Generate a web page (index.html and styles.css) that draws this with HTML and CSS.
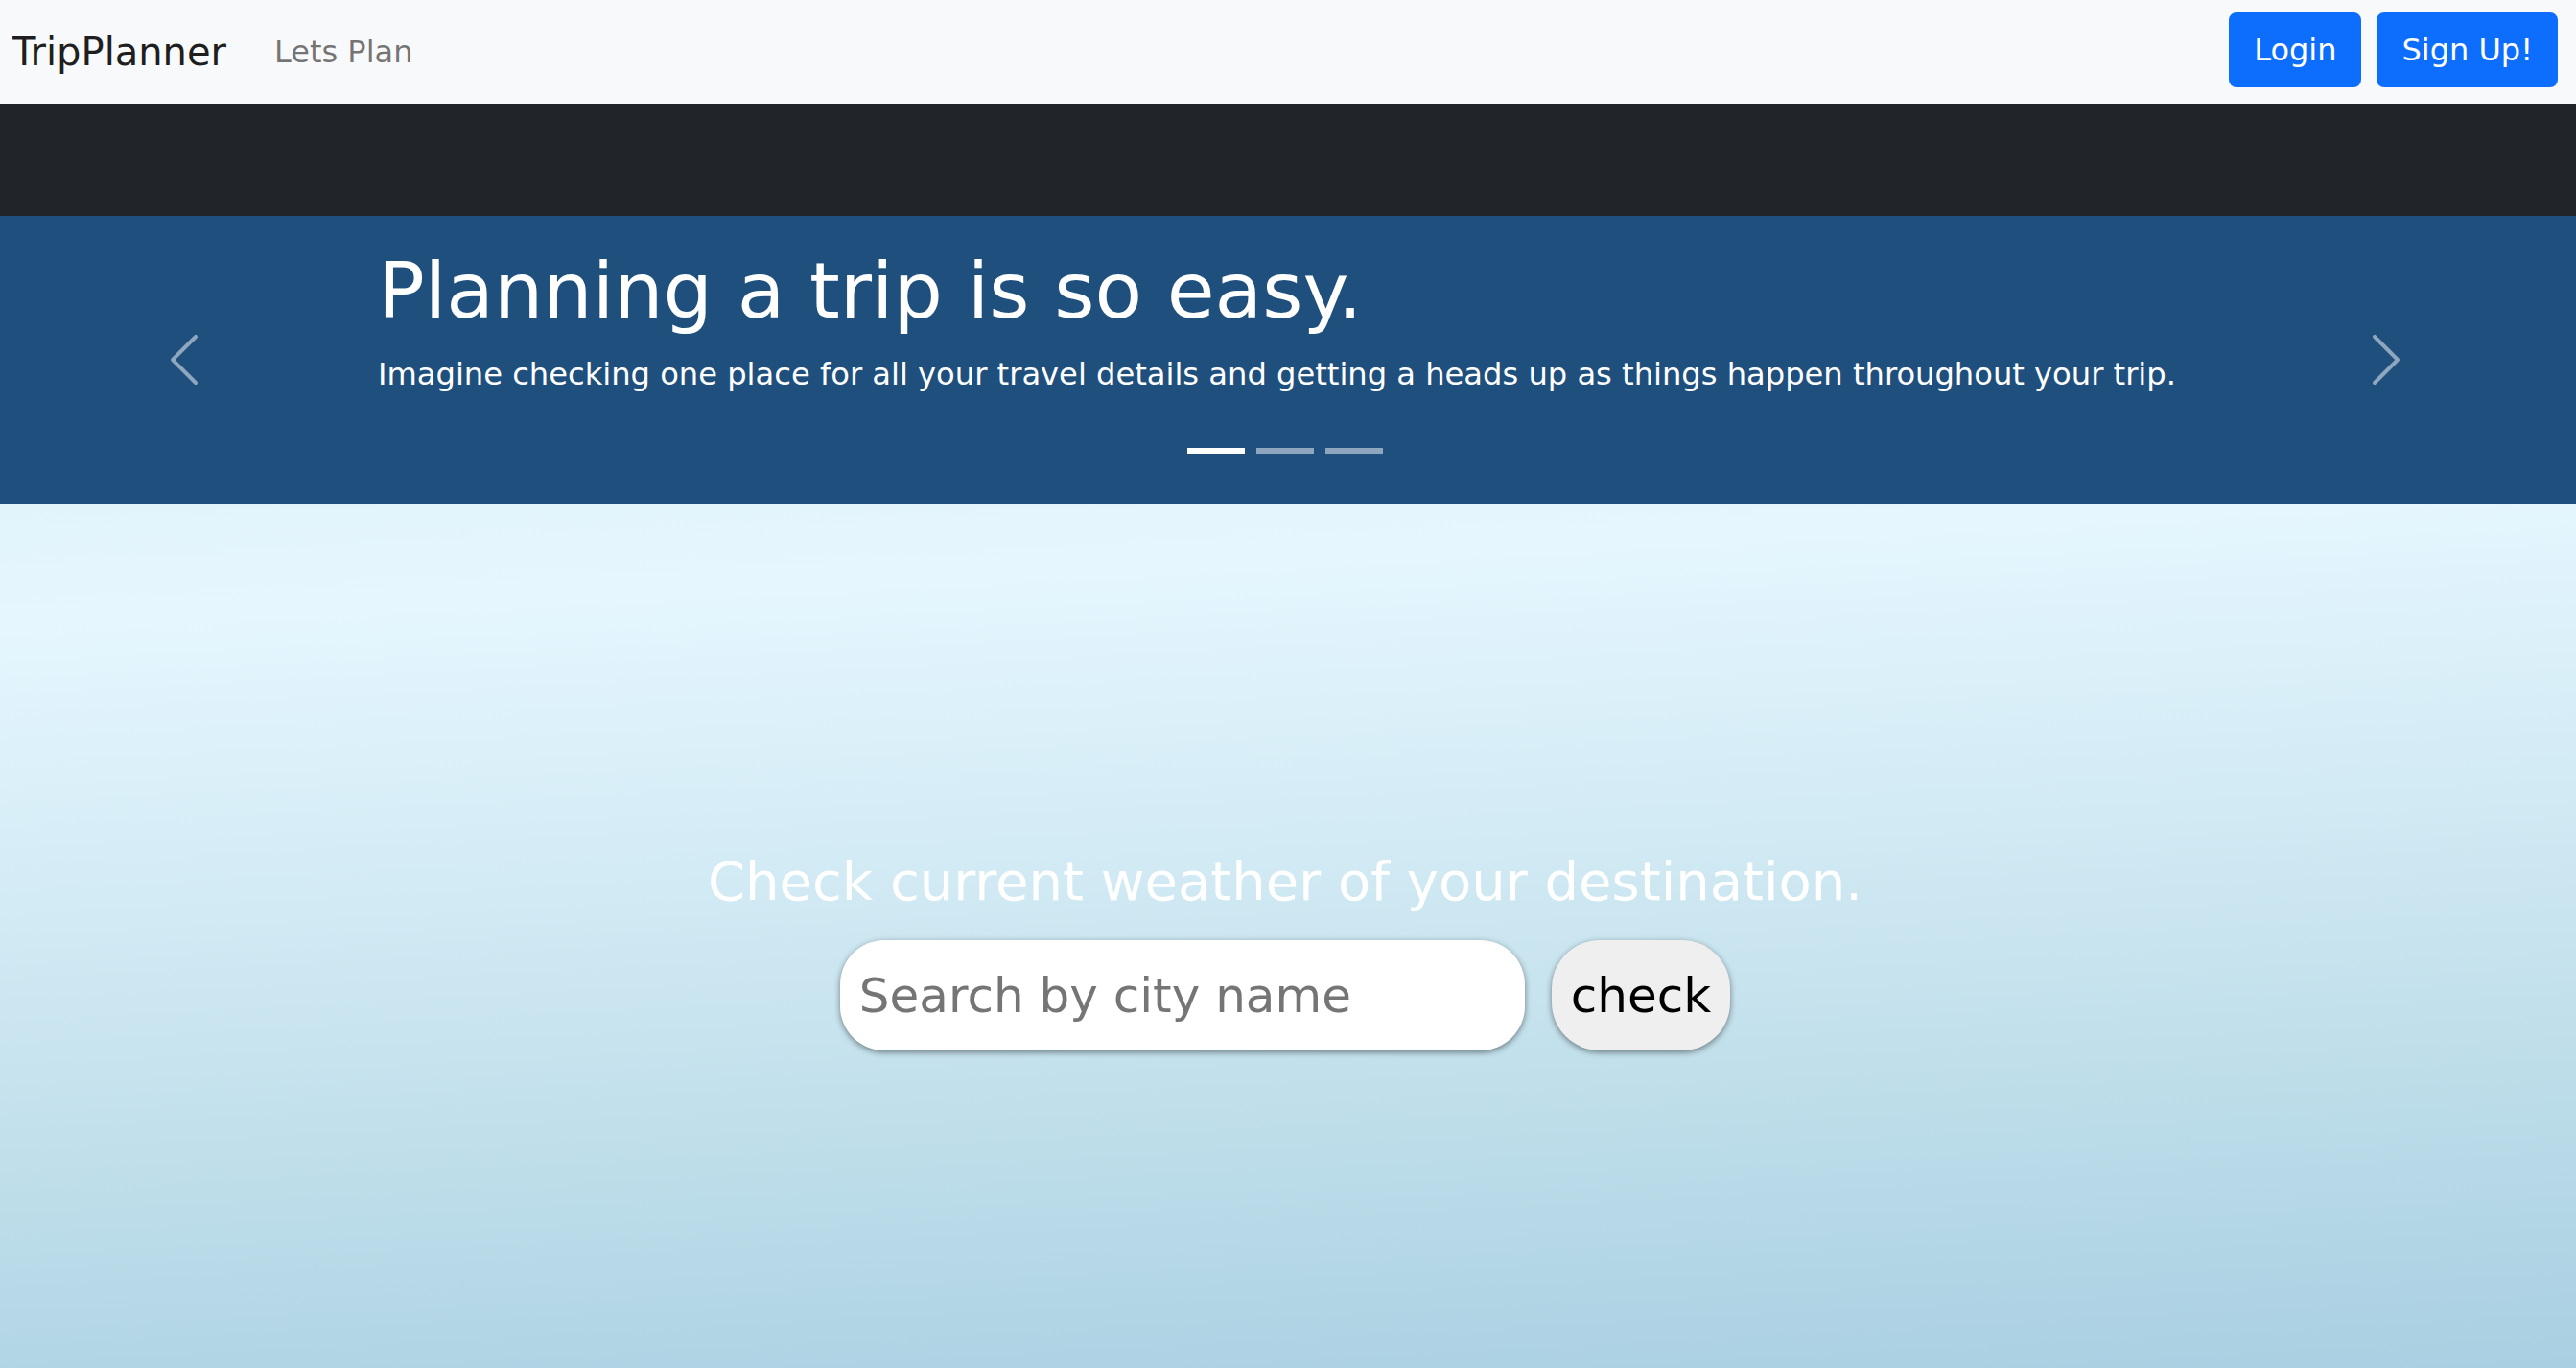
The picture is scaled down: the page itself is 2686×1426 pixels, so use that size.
FILE: index.html
```html
<!DOCTYPE html>
<html lang="en">
<head>
<meta charset="utf-8">
<title>TripPlanner</title>
<link rel="stylesheet" href="styles.css">
</head>
<body>
<nav class="navbar">
  <div class="nav-left">
    <a class="brand" href="#">TripPlanner</a>
    <a class="nav-link" href="#">Lets Plan</a>
  </div>
  <div class="nav-right">
    <button class="btn" type="button">Login</button>
    <button class="btn" type="button">Sign Up!</button>
  </div>
</nav>

<div class="dark-band"></div>

<section class="carousel">
  <button class="control control-prev" type="button" aria-label="Previous">
    <svg viewBox="0 0 16 16" width="64" height="64"><path d="M11.354 1.646a.5.5 0 0 1 0 .708L5.707 8l5.647 5.646a.5.5 0 0 1-.708.708l-6-6a.5.5 0 0 1 0-.708l6-6a.5.5 0 0 1 .708 0z"/></svg>
  </button>
  <div class="caption">
    <h1>Planning a trip is so easy.</h1>
    <p>Imagine checking one place for all your travel details and getting a heads up as things happen throughout your trip.</p>
  </div>
  <button class="control control-next" type="button" aria-label="Next">
    <svg viewBox="0 0 16 16" width="64" height="64"><path d="M4.646 1.646a.5.5 0 0 1 .708 0l6 6a.5.5 0 0 1 0 .708l-6 6a.5.5 0 0 1-.708-.708L10.293 8 4.646 2.354a.5.5 0 0 1 0-.708z"/></svg>
  </button>
  <div class="indicators">
    <span class="indicator active"></span>
    <span class="indicator"></span>
    <span class="indicator"></span>
  </div>
</section>

<main class="weather">
  <h3>Check current weather of your destination.</h3>
  <form class="search" onsubmit="return false;">
    <input class="search-input" type="text" placeholder="Search by city name">
    <button class="search-btn" type="submit">check</button>
  </form>
</main>
</body>
</html>
```
FILE: styles.css
```css
* {
  box-sizing: border-box;
}

html, body {
  margin: 0;
  padding: 0;
}

body {
  font-family: "DejaVu Sans", "Verdana", sans-serif;
  color: #212529;
  background: #a9cfe2;
}

.navbar {
  display: flex;
  align-items: center;
  justify-content: space-between;
  height: 108px;
  padding: 0 19px 0 13px;
  background: #f8f9fa;
}

.nav-left {
  display: flex;
  align-items: center;
}

.brand {
  font-size: 40px;
  line-height: 60px;
  padding-top: 0;
  color: rgba(0, 0, 0, 0.9);
  text-decoration: none;
  margin-right: 50px;
}

.nav-link {
  font-size: 32px;
  line-height: 48px;
  color: rgba(0, 0, 0, 0.55);
  text-decoration: none;
}

.nav-right {
  display: flex;
  gap: 16px;
  margin-bottom: 4px;
}

.btn {
  font-family: inherit;
  font-size: 32px;
  line-height: 48px;
  padding: 13px 24px;
  color: #fff;
  background: #0d6efd;
  border: 2px solid #0d6efd;
  border-radius: 8px;
  cursor: pointer;
}

.dark-band {
  height: 117px;
  background: #212529;
}

.carousel {
  position: relative;
  display: flex;
  height: 300px;
  background: #1f4f7d;
  color: #fff;
}

.control {
  display: flex;
  align-items: center;
  justify-content: center;
  padding: 0;
  border: 0;
  background: none;
  fill: rgba(255, 255, 255, 0.5);
}

.control-prev {
  flex: 0 0 384px;
}

.control-next {
  flex: 0 0 396px;
}

.caption {
  flex: 1;
  padding: 30px 0 0 10px;
}

.caption h1 {
  margin: 0 0 14px;
  font-size: 81px;
  line-height: 1.2;
  font-weight: 400;
}

.caption p {
  margin: 0;
  font-size: 32.15px;
  line-height: 1.5;
  white-space: nowrap;
}

.indicators {
  position: absolute;
  left: 0;
  right: 6px;
  bottom: 32px;
  display: flex;
  justify-content: center;
}

.indicator {
  width: 60px;
  height: 46px;
  margin: 0 6px;
  border-top: 20px solid transparent;
  border-bottom: 20px solid transparent;
  background-clip: padding-box;
  background-color: rgba(255, 255, 255, 0.5);
}

.indicator.active {
  background-color: #fff;
}

.weather {
  height: 901px;
  padding: 360px 6px 0 0;
  background: linear-gradient(177deg, #e2f4fb 0%, #e5f6fe 12%, #d3ebf5 40%, #bddde9 70%, #a9cfe2 100%);
  text-align: center;
}

.weather h3 {
  margin: 0;
  font-size: 56px;
  line-height: 1.2;
  font-weight: 400;
  color: #fff;
}

.search {
  display: flex;
  justify-content: center;
  gap: 28px;
  margin-top: 28px;
}

.search-input {
  width: 714px;
  height: 115px;
  padding: 0 20px;
  border: 0;
  border-radius: 46px;
  font-family: inherit;
  font-size: 50px;
  color: #212529;
  background: #fff;
  box-shadow: 0 2px 6px rgba(0, 0, 0, 0.45);
  outline: none;
}

.search-input::placeholder {
  color: #757575;
}

.search-btn {
  height: 115px;
  padding: 0 20px;
  border: 0;
  border-radius: 50px;
  font-family: inherit;
  font-size: 50px;
  color: #000;
  background: #efefef;
  box-shadow: 0 2px 6px rgba(0, 0, 0, 0.45);
  cursor: pointer;
}
```
